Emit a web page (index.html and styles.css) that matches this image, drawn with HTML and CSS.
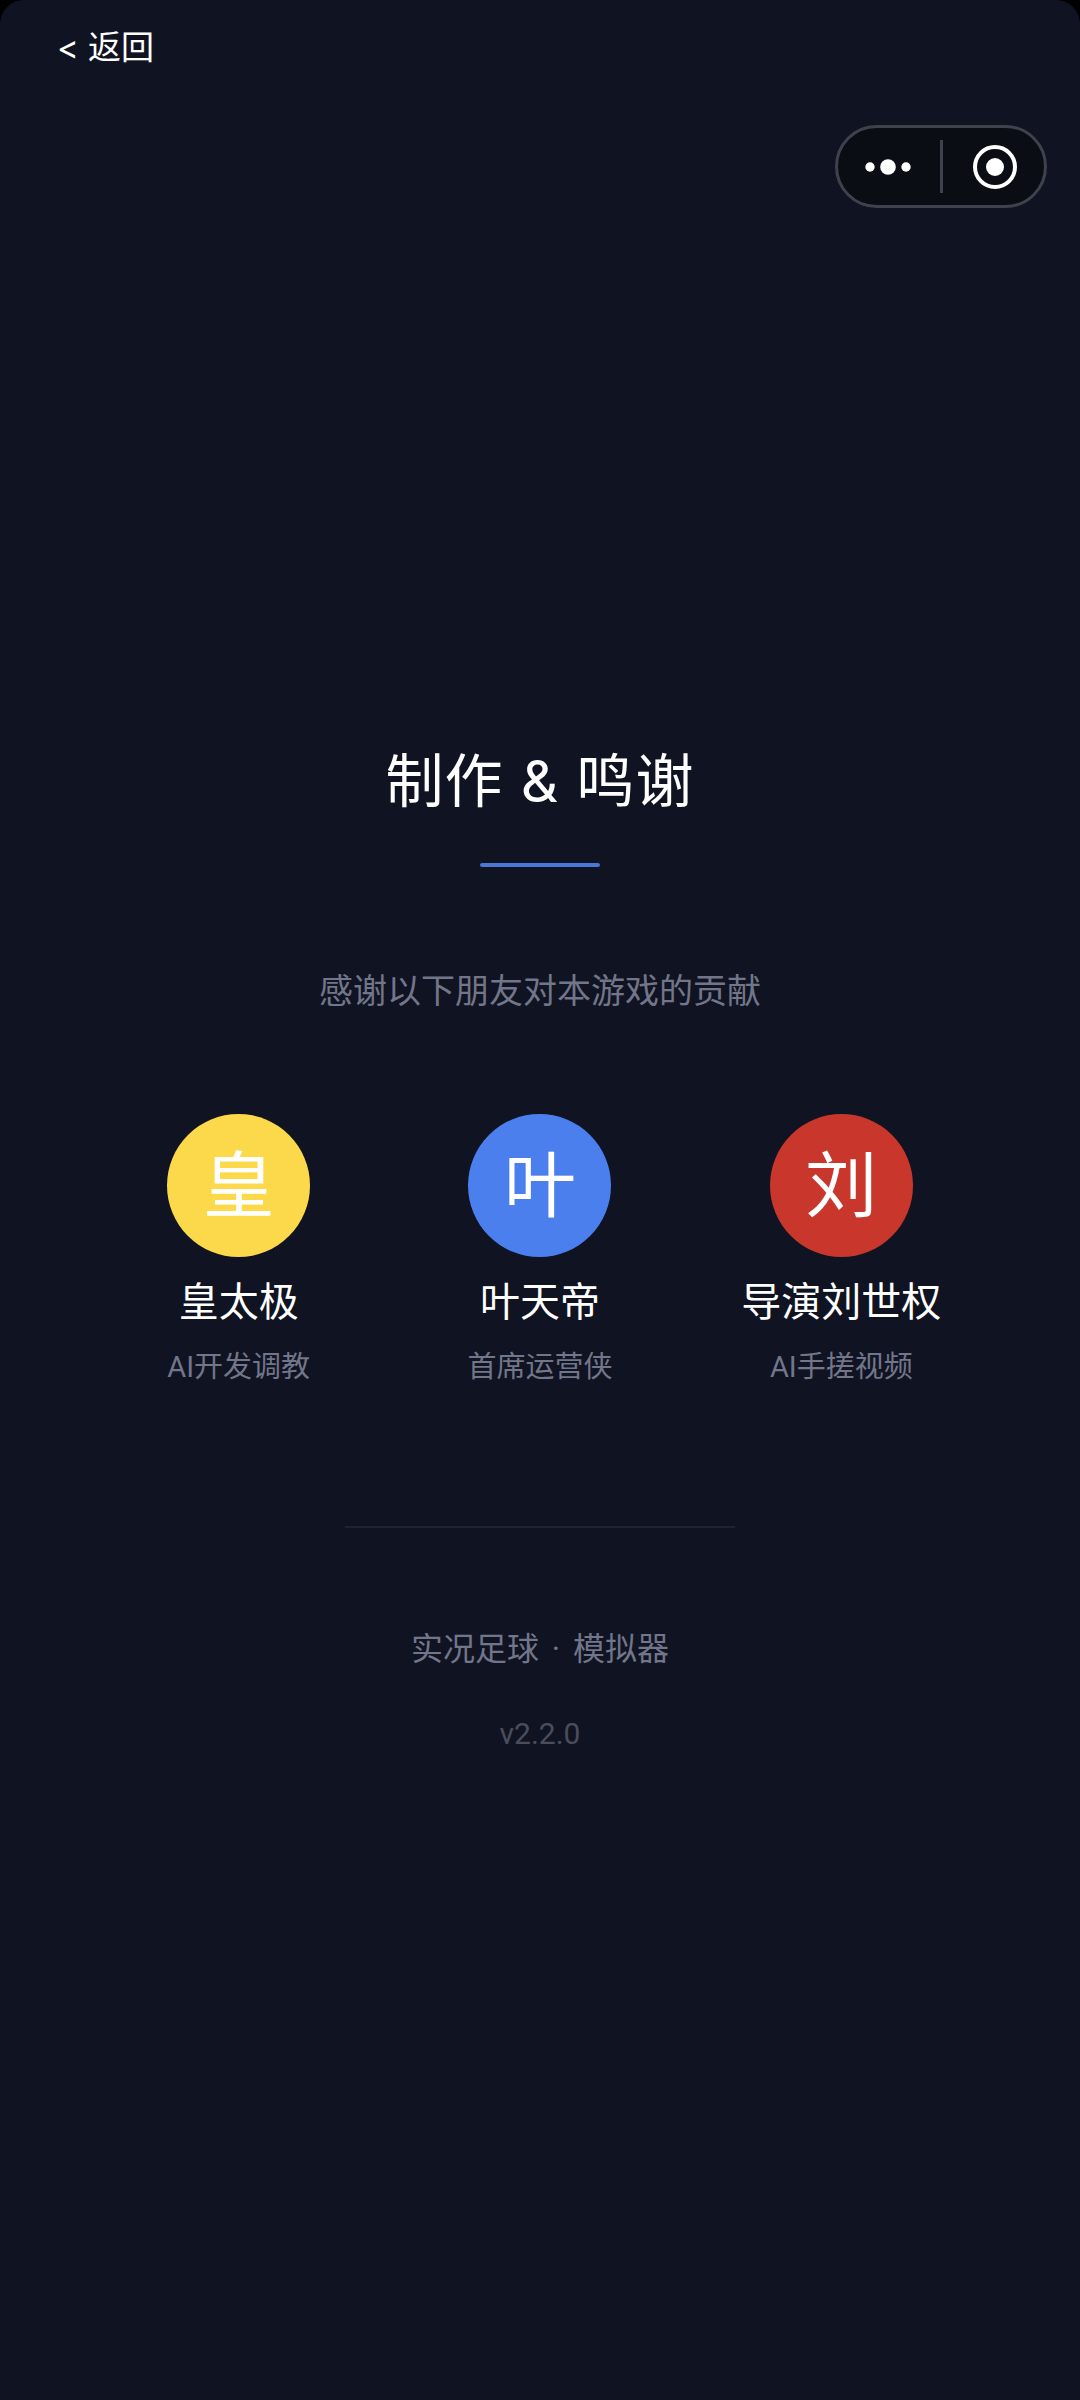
FILE: index.html
```html
<!DOCTYPE html>
<html lang="zh-CN">

<head>
    <meta charset="UTF-8">
    <meta name="viewport" content="width=device-width, initial-scale=1.0">
    <title>制作 &amp; 鸣谢</title>
    <link rel="stylesheet" href="styles.css">
</head>

<body>
    <div class="page">
        <a href="javascript:;" class="back">&lt; 返回</a>

        <div class="capsule">
            <span class="capsule-btn">
                <svg class="dots" width="46" height="20" viewBox="0 0 46 20">
                    <circle cx="5" cy="10" r="4.7" fill="#fff" />
                    <circle cx="23" cy="10" r="7.8" fill="#fff" />
                    <circle cx="41" cy="10" r="4.7" fill="#fff" />
                </svg>
            </span>
            <span class="capsule-line"></span>
            <span class="capsule-btn">
                <svg class="ring" width="44" height="44" viewBox="0 0 44 44">
                    <circle cx="22" cy="22" r="20" fill="none" stroke="#fff" stroke-width="4" />
                    <circle cx="22" cy="22" r="9" fill="#fff" />
                </svg>
            </span>
        </div>

        <div class="content">
            <h1 class="title">制作 &amp; 鸣谢</h1>
            <div class="title-line"></div>
            <p class="subtitle">感谢以下朋友对本游戏的贡献</p>

            <div class="people">
                <div class="person">
                    <div class="avatar yellow">皇</div>
                    <div class="name">皇太极</div>
                    <div class="role">AI开发调教</div>
                </div>
                <div class="person">
                    <div class="avatar blue">叶</div>
                    <div class="name">叶天帝</div>
                    <div class="role">首席运营侠</div>
                </div>
                <div class="person">
                    <div class="avatar red">刘</div>
                    <div class="name">导演刘世权</div>
                    <div class="role">AI手搓视频</div>
                </div>
            </div>

            <div class="divider"></div>
            <p class="game">实况足球 · 模拟器</p>
            <p class="version">v2.2.0</p>
        </div>
    </div>
</body>

</html>
```

FILE: styles.css
```css
* {
    margin: 0;
    padding: 0;
    box-sizing: border-box;
    text-decoration: none;
}

html,
body {
    background: #000;
}

body {
    width: 1080px;
    height: 2400px;
    overflow: hidden;
    font-family: "Roboto", "Noto Sans CJK SC", sans-serif;
}

.page {
    position: relative;
    height: 2400px;
    padding-top: 24px;
    background: #101321;
    border-radius: 24px 24px 0 0;
}

.back {
    display: block;
    height: 46px;
    padding-left: 57px;
    font-family: "Inter", "Noto Sans CJK SC", sans-serif;
    font-size: 33px;
    line-height: 46px;
    color: #fff;
}

/* wechat menu capsule */
.capsule {
    position: absolute;
    top: 125px;
    left: 835px;
    display: flex;
    align-items: center;
    width: 212px;
    height: 83px;
    background: #0b0d14;
    border: 3px solid #3f424d;
    border-radius: 42px;
}

.capsule-btn {
    display: flex;
    flex: 1;
    align-items: center;
    justify-content: center;
}

.capsule-btn svg {
    display: block;
}

.capsule-btn .dots {
    margin-right: 2px;
}

.capsule-btn .ring {
    margin-left: 3px;
}

.capsule-line {
    width: 3px;
    height: 53px;
    background: #3f424d;
}

.content {
    display: flex;
    flex-direction: column;
    align-items: center;
    padding-top: 671px;
}

.title {
    font-family: "Inter", "Noto Sans CJK SC", sans-serif;
    font-size: 58px;
    font-weight: 400;
    line-height: 80px;
    letter-spacing: 1px;
    color: #fff;
}

.title-line {
    width: 120px;
    height: 4px;
    margin-top: 42px;
    background: #4a76d8;
    border-radius: 2px;
}

.subtitle {
    margin-top: 101px;
    font-size: 34px;
    line-height: 46px;
    color: #72768a;
}

.people {
    display: flex;
    justify-content: center;
    width: 100%;
    margin-top: 100px;
}

.person {
    display: flex;
    flex-direction: column;
    align-items: center;
    width: 301.3px;
}

.avatar {
    width: 143px;
    height: 143px;
    font-size: 72px;
    line-height: 145px;
    text-align: center;
    color: #fff;
    border-radius: 50%;
}

.yellow {
    background: #fcd94a;
}

.blue {
    background: #4c7fee;
}

.red {
    background: #c9372c;
}

.name {
    margin-top: 18px;
    font-size: 40px;
    line-height: 56px;
    color: #fff;
}

.role {
    margin-top: 15px;
    font-size: 29px;
    line-height: 42px;
    color: #72768a;
}

.divider {
    width: 390px;
    height: 2px;
    margin-top: 138px;
    background: #20232f;
}

.game {
    margin-top: 98px;
    font-size: 32px;
    line-height: 46px;
    word-spacing: 5px;
    color: #72768a;
}

.version {
    margin-top: 40px;
    font-size: 30px;
    line-height: 44px;
    color: #4a4d5c;
}
```
